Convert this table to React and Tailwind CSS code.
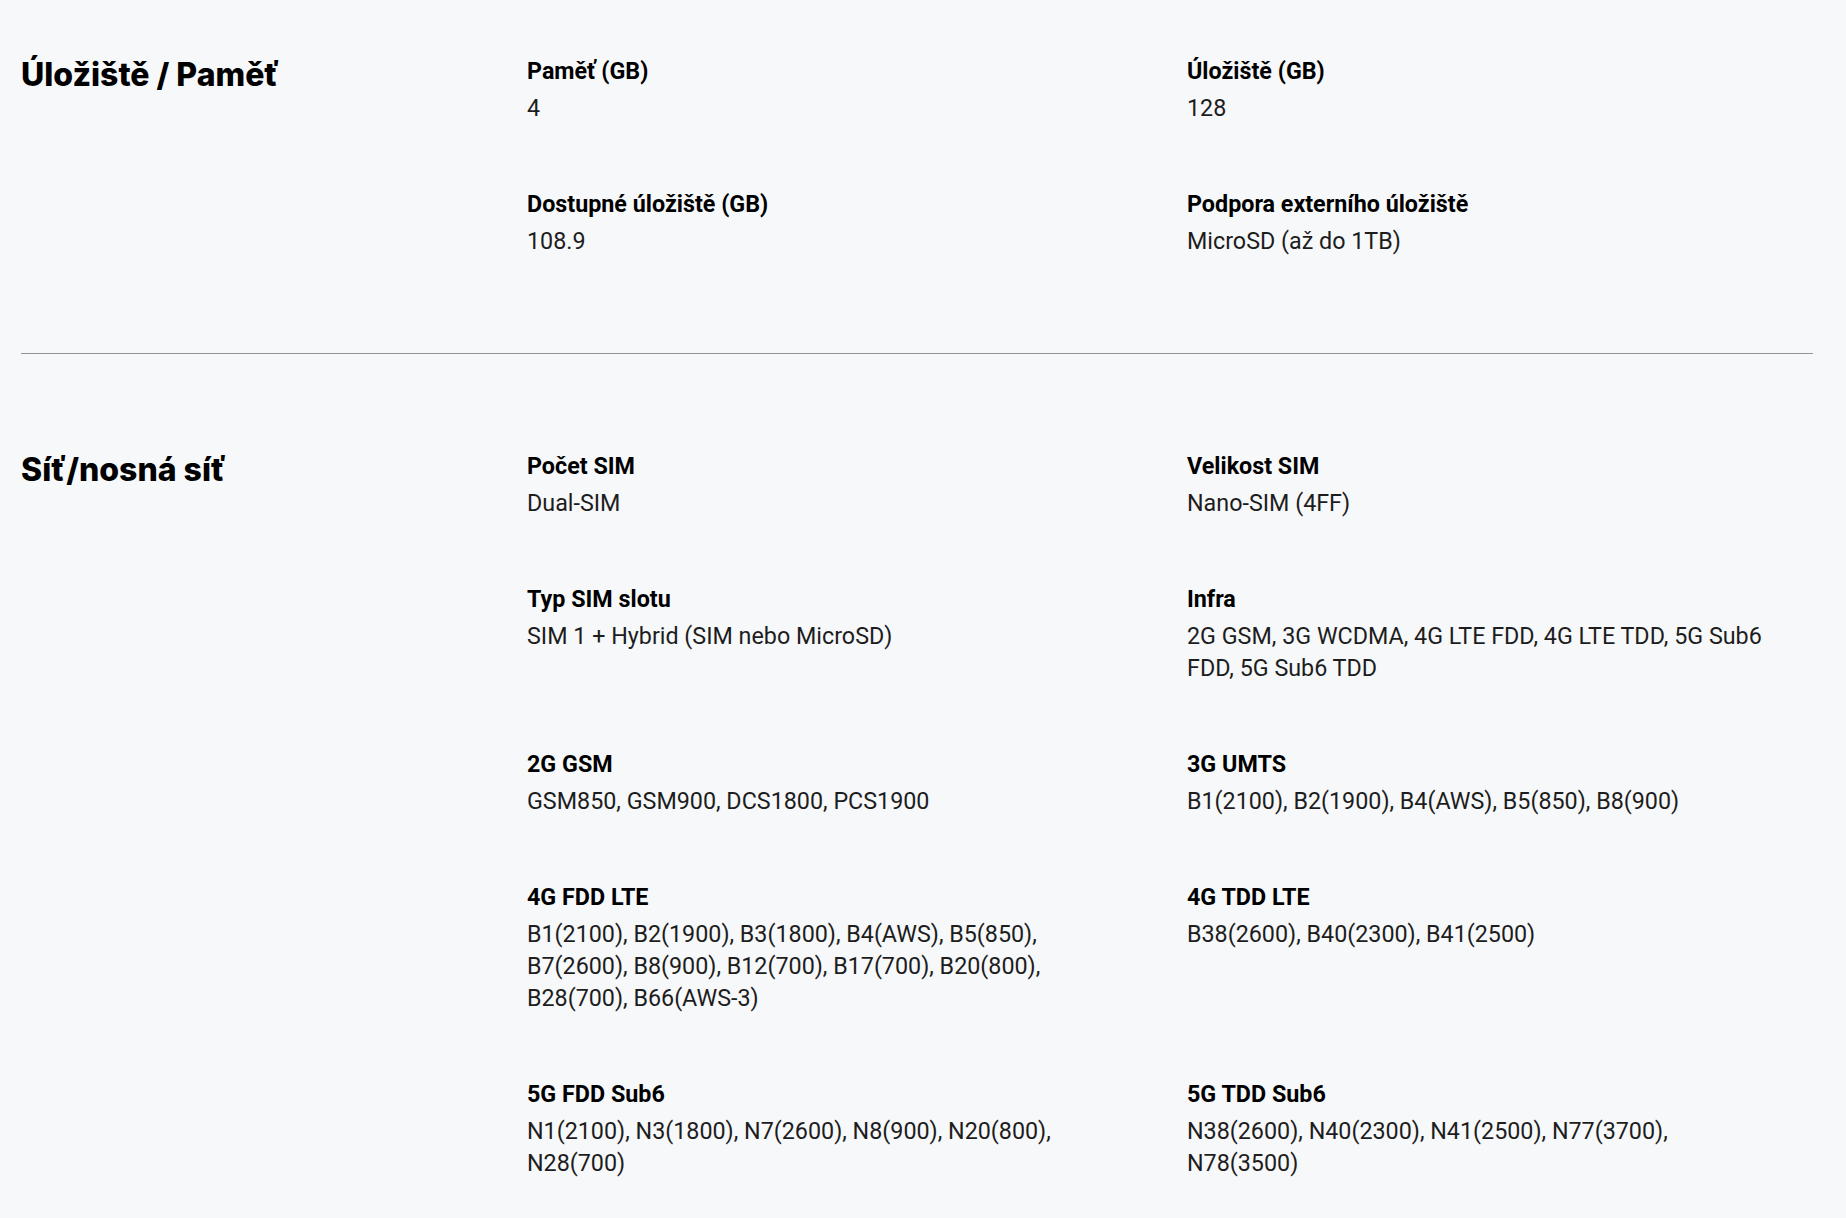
import React from 'react'

const sections = [
  {
    title: 'Úložiště / Paměť',
    specs: [
      { label: 'Paměť (GB)', value: '4' },
      { label: 'Úložiště (GB)', value: '128' },
      { label: 'Dostupné úložiště (GB)', value: '108.9' },
      { label: 'Podpora externího úložiště', value: 'MicroSD (až do 1TB)' },
    ],
  },
  {
    title: 'Síť/nosná síť',
    specs: [
      { label: 'Počet SIM', value: 'Dual-SIM' },
      { label: 'Velikost SIM', value: 'Nano-SIM (4FF)' },
      { label: 'Typ SIM slotu', value: 'SIM 1 + Hybrid (SIM nebo MicroSD)' },
      { label: 'Infra', value: '2G GSM, 3G WCDMA, 4G LTE FDD, 4G LTE TDD, 5G Sub6 FDD, 5G Sub6 TDD' },
      { label: '2G GSM', value: 'GSM850, GSM900, DCS1800, PCS1900' },
      { label: '3G UMTS', value: 'B1(2100), B2(1900), B4(AWS), B5(850), B8(900)' },
      {
        label: '4G FDD LTE',
        value: 'B1(2100), B2(1900), B3(1800), B4(AWS), B5(850), B7(2600), B8(900), B12(700), B17(700), B20(800), B28(700), B66(AWS-3)',
      },
      { label: '4G TDD LTE', value: 'B38(2600), B40(2300), B41(2500)' },
      { label: '5G FDD Sub6', value: 'N1(2100), N3(1800), N7(2600), N8(900), N20(800), N28(700)' },
      { label: '5G TDD Sub6', value: 'N38(2600), N40(2300), N41(2500), N77(3700), N78(3500)' },
    ],
  },
]

function SpecSection({ title, specs, className }) {
  return (
    <section className={`flex ${className}`}>
      <h2 className="w-[506px] shrink-0 pt-[2px] font-['Inter',sans-serif] text-[32px] font-extrabold leading-[36px] text-black">
        {title}
      </h2>
      <div className="grid flex-1 grid-cols-2 gap-x-[34px] gap-y-[64px]">
        {specs.map((spec) => (
          <div key={spec.label} className="pr-[36px]">
            <p className="text-[23.3px] font-bold leading-[32px] text-black">{spec.label}</p>
            <p className="mt-[5px] text-[23.3px] leading-[32px] text-[#1d1d1d]">{spec.value}</p>
          </div>
        ))}
      </div>
    </section>
  )
}

export default function App() {
  return (
    <div className="min-h-screen bg-[#f7f8fa] pl-[21px] pr-[33px] font-['Roboto',sans-serif]">
      <SpecSection {...sections[0]} className="pt-[55px] pb-[96px]" />
      <div className="h-px bg-[#939393]" />
      <SpecSection {...sections[1]} className="pt-[96px] pb-[40px]" />
    </div>
  )
}
